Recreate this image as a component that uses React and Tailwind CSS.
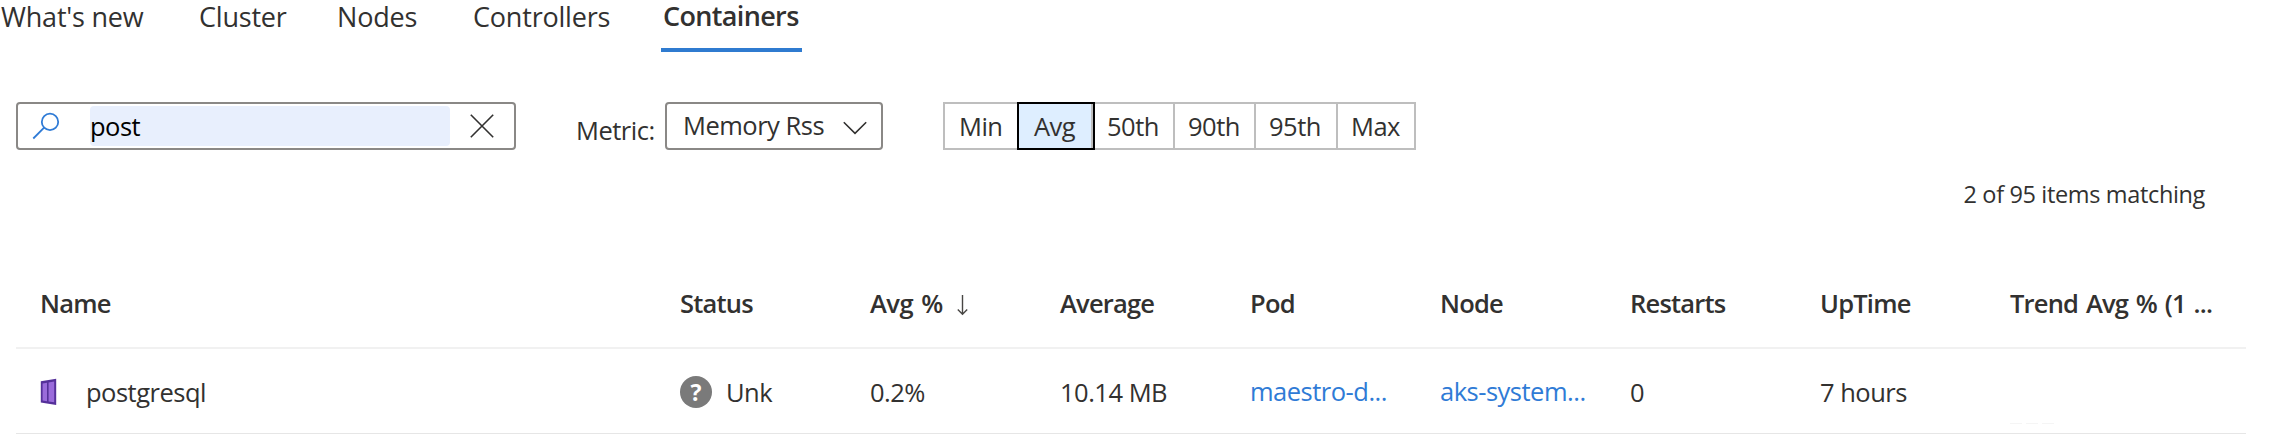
const tabs = [
  { label: "What's new", box: 'w-[199px] pl-[1px]' },
  { label: 'Cluster', box: 'w-[138px]' },
  { label: 'Nodes', box: 'w-[136px]' },
  { label: 'Controllers', box: 'w-[188px]' },
];

const stats = [
  { label: '50th', box: 'w-[80px] pl-[12px]' },
  { label: '90th', box: 'w-[81px] pl-[13px]' },
  { label: '95th', box: 'w-[82px] pl-[13px]' },
  { label: 'Max', box: 'w-[78px] pl-[13px]' },
];

const grid = 'grid grid-cols-[640px_repeat(7,190px)_236px] pl-[24px]';

function SearchIcon() {
  return (
    <svg className="ml-[14px] size-[28px] shrink-0" viewBox="0 0 28 28" fill="none" stroke="#2f7bd6" strokeWidth="1.8">
      <circle cx="18" cy="9.9" r="8.2" />
      <path d="M12.1 15.7 1.3 26.5" />
    </svg>
  );
}

function ContainerIcon() {
  return (
    <svg className="h-[28px] w-[17px] shrink-0" viewBox="0 0 17 28">
      <path d="M0.8 3.2 16.2 0.8V27L0.8 24.6Z" fill="#55309a" />
      <path d="M2.6 5.4 7 4.8V23.2L2.6 22.6Z" fill="#9a6bdb" />
      <path d="M8.6 4.5 14.2 3.6V24.3L8.6 23.4Z" fill="#9a6bdb" />
    </svg>
  );
}

export default function App() {
  return (
    <div className="flex h-[434px] w-[2270px] flex-col overflow-hidden bg-white font-['Open_Sans','Noto_Sans',sans-serif] text-[25.5px] leading-[36px] tracking-[-0.5px] whitespace-nowrap text-[#323130]">
      <nav className="flex h-[52px] text-[27px] leading-[34px] tracking-[-0.2px]">
        {tabs.map((t) => (
          <span key={t.label} className={t.box}>{t.label}</span>
        ))}
        <span className="h-[52px] w-[141px] border-b-4 border-[#2f7bd0] pl-[2px] leading-[32px] font-semibold tracking-[-0.65px]">Containers</span>
      </nav>

      <div className="mt-[50px] flex h-[48px] pl-[16px]">
        <div className="flex h-[48px] w-[500px] items-center rounded-[4px] border-2 border-[#8a8886]">
          <SearchIcon />
          <div className="ml-[30px] h-[40px] w-[360px] rounded-[4px] bg-[#e8effd] pt-[2px] text-black">post</div>
          <svg className="ml-[20px] size-[24px]" viewBox="0 0 24 24" stroke="#323130" strokeWidth="1.6">
            <path d="M0.8 0.8 23.2 23.2M23.2 0.8 0.8 23.2" />
          </svg>
        </div>
        <span className="mt-[10px] ml-[60px] w-[89px]">Metric:</span>
        <div className="flex h-[48px] w-[218px] rounded-[4px] border-2 border-[#8a8886] pl-[16px]">
          <span className="mt-[3px] w-[160px]">Memory Rss</span>
          <svg className="mt-[17px] h-[14px] w-[24px]" viewBox="0 0 24 14" fill="none" stroke="#323130" strokeWidth="1.6">
            <path d="M0.8 1.2 12 12.4 23.2 1.2" />
          </svg>
        </div>
        <div className="ml-[60px] flex h-[48px] leading-[44px]">
          <span className="w-[74px] border-2 border-r-0 border-[#bebebe] pl-[14px]">Min</span>
          <span className="flex w-[78px] justify-between border-2 border-black bg-[#deeeff] pl-[15px]">
            Avg
            <i className="w-[2px] bg-[#bebebe]" />
          </span>
          {stats.map((s) => (
            <span key={s.label} className={'border-2 border-l-0 border-[#bebebe] ' + s.box}>{s.label}</span>
          ))}
        </div>
      </div>

      <div className="mt-[26px] flex justify-end pr-[65px] text-[23.5px] tracking-[-0.35px]">2 of 95 items matching</div>

      <div className="mt-[53px] ml-[16px] w-[2230px]">
        <div className={grid + ' h-[84px] border-b-2 border-[#f1f1f1] pt-[20px] font-semibold tracking-[-0.8px] [word-spacing:1.9px]'}>
          <span>Name</span>
          <span>Status</span>
          <span className="flex tracking-[-0.5px]">
            <span className="w-[87px]">Avg %</span>
            <svg className="mt-[9px] h-[22px] w-[12px]" viewBox="0 0 12 22" fill="none" stroke="#484644" strokeWidth="1.4">
              <path d="M5.5 1V20M0.8 15.5 5.5 20.2 10.2 15.5" />
            </svg>
          </span>
          <span>Average</span>
          <span>Pod</span>
          <span>Node</span>
          <span>Restarts</span>
          <span>UpTime</span>
          <span>Trend Avg % (1 ...</span>
        </div>
        <div className={grid + ' h-[85px] border-b border-[#e6e6e6] pt-[25px]'}>
          <span className="flex tracking-[-0.5px]">
            <span className="mt-[4px] w-[46px]"><ContainerIcon /></span>
            postgresql
          </span>
          <span className="flex">
            <span className="mt-[2px] mr-[14px] flex size-[32px] items-center justify-center rounded-full bg-[#7a7a7a] text-[23px] leading-[32px] font-bold tracking-normal text-white">?</span>
            Unk
          </span>
          <span>0.2%</span>
          <span>10.14 MB</span>
          <span className="-mt-[1px] text-[#2f7bd6]">maestro-d...</span>
          <span className="-mt-[1px] text-[#2f7bd6]">aks-system...</span>
          <span>0</span>
          <span>7 hours</span>
          <span className="flex gap-[4px] pt-[49px]">
            <i className="h-px w-[12px] bg-[#f5f5f5]" />
            <i className="h-px w-[12px] bg-[#f5f5f5]" />
            <i className="h-px w-[12px] bg-[#f5f5f5]" />
          </span>
        </div>
      </div>
    </div>
  );
}
